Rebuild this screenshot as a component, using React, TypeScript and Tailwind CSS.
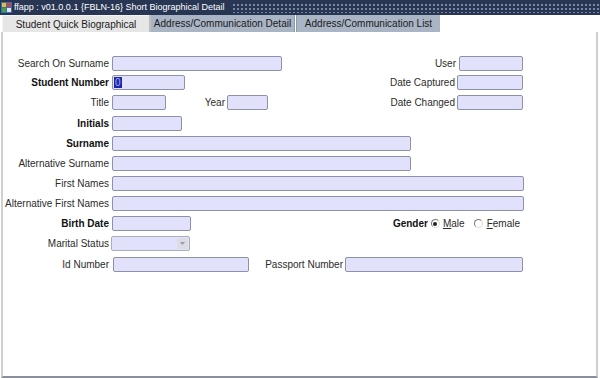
import React from 'react'

const font = { fontFamily: '"Liberation Sans", Arial, sans-serif' }

function Input({ w, children }: { w: string; children?: React.ReactNode }) {
  return (
    <div className={`${w} flex h-[15px] items-center overflow-hidden rounded-[2px] border border-[#8d92a8] bg-[#e1e1fb] pl-px`}>
      {children}
    </div>
  )
}

function Label({ children, bold, w = 'w-[106px]' }: { children: React.ReactNode; bold?: boolean; w?: string }) {
  return (
    <span className={`${w} shrink-0 whitespace-nowrap text-right leading-none ${bold ? 'font-bold text-[#111]' : 'text-[#2b2b2b]'}`}>
      {children}
    </span>
  )
}

function Radio({ on }: { on?: boolean }) {
  return (
    <span className="flex h-[9px] w-[9px] items-center justify-center rounded-full border border-l-[#777] border-t-[#777] border-r-[#ddd] border-b-[#ddd] bg-white">
      {on && <span className="h-[4px] w-[4px] rounded-full bg-[#222]" />}
    </span>
  )
}

export default function App() {
  return (
    <div className="h-[378px] w-[600px] overflow-hidden bg-white text-[10px]" style={font}>
      {/* title bar */}
      <div className="flex h-[15px] items-center bg-[#283654] text-white">
        <svg width="11" height="11" viewBox="0 0 11 11" className="ml-[1px] shrink-0">
          <rect x="0" y="0" width="11" height="11" fill="#3a6fb0" />
          <rect x="1" y="1" width="4" height="4" fill="#e0c030" />
          <rect x="6" y="1" width="4" height="4" fill="#d04040" />
          <rect x="1" y="6" width="4" height="4" fill="#40a050" />
          <rect x="6" y="6" width="4" height="4" fill="#e8e8f0" />
        </svg>
        <span className="ml-[2px] whitespace-nowrap text-[9px] leading-none">ffapp : v01.0.0.1 {'{'}FBLN-16{'}'} Short Biographical Detail</span>
        <span className="ml-[7px] h-[10px] flex-1 bg-[radial-gradient(circle,#7b89a8_0.7px,transparent_0.9px)] bg-[length:4px_4px]" />
      </div>

      {/* tabs */}
      <div className="flex h-[17px] items-end whitespace-nowrap bg-white">
        <div className="ml-[2px] flex h-[17px] w-[147px] items-center justify-center border-l border-t border-[#f4f4f4] bg-[#e6e6e6] text-[#1a1a1a]">
          Student Quick Biographical
        </div>
        <div className="h-[17px] w-[2px] bg-[#bfbfbf]" />
        <div className="flex h-[17px] w-[143px] items-center justify-center bg-[#a9b4c5] text-[#1a1a1a]">
          Address/Communication Detail
        </div>
        <div className="h-[17px] w-[3px] border-x border-[#8e98aa] bg-white" />
        <div className="flex h-[17px] w-[143px] items-center justify-center bg-[#a9b4c5] text-[#1a1a1a]">
          Address/Communication List
        </div>
      </div>

      {/* panel */}
      <div className="ml-[1px] flex h-[346px] w-[597px] flex-col border-l-2 border-r-2 border-b-2 border-l-[#d0d0d0] border-r-[#cfcfcf] border-b-[#8a8f99]">
        <div className="mt-[24px] flex h-[15px] w-[520px] items-center">
          <Label>Search On Surname</Label>
          <div className="ml-[3px]"><Input w="w-[170px]" /></div>
          <div className="ml-auto flex items-center gap-[3px]">
            <Label w="w-auto">User</Label>
            <Input w="w-[64px]" />
          </div>
        </div>

        <div className="mt-[4px] flex h-[15px] w-[520px] items-center">
          <Label bold>Student Number</Label>
          <div className="ml-[3px]">
            <Input w="w-[73px]">
              <span className="bg-[#1f27a8] px-px leading-[11px] text-[#9fb0ff]">0</span>
            </Input>
          </div>
          <div className="ml-auto flex items-center gap-[2px]">
            <Label w="w-auto">Date Captured</Label>
            <Input w="w-[66px]" />
          </div>
        </div>

        <div className="mt-[5px] flex h-[15px] w-[520px] items-center">
          <Label>Title</Label>
          <div className="ml-[3px]"><Input w="w-[54px]" /></div>
          <Label w="w-[59px]">Year</Label>
          <div className="ml-[2px]"><Input w="w-[41px]" /></div>
          <div className="ml-auto flex items-center gap-[2px]">
            <Label w="w-auto">Date Changed</Label>
            <Input w="w-[66px]" />
          </div>
        </div>

        <div className="mt-[6px] flex h-[15px] items-center">
          <Label bold>Initials</Label>
          <div className="ml-[3px]"><Input w="w-[70px]" /></div>
        </div>

        <div className="mt-[5px] flex h-[15px] items-center">
          <Label bold>Surname</Label>
          <div className="ml-[3px]"><Input w="w-[299px]" /></div>
        </div>

        <div className="mt-[5px] flex h-[15px] items-center">
          <Label>Alternative Surname</Label>
          <div className="ml-[3px]"><Input w="w-[299px]" /></div>
        </div>

        <div className="mt-[5px] flex h-[15px] items-center">
          <Label>First Names</Label>
          <div className="ml-[3px]"><Input w="w-[412px]" /></div>
        </div>

        <div className="mt-[5px] flex h-[15px] items-center">
          <Label>Alternative First Names</Label>
          <div className="ml-[3px]"><Input w="w-[412px]" /></div>
        </div>

        <div className="mt-[5px] flex h-[15px] w-[520px] items-center">
          <Label bold>Birth Date</Label>
          <div className="ml-[3px]"><Input w="w-[79px]" /></div>
          <div className="ml-auto mr-[3px] flex items-center text-[#2b2b2b]">
            <span className="mr-[3px] font-bold text-[#111]">Gender</span>
            <Radio on />
            <span className="ml-[3px]"><span className="underline">M</span>ale</span>
            <span className="ml-[9px]"><Radio /></span>
            <span className="ml-[4px]"><span className="underline">F</span>emale</span>
          </div>
        </div>

        <div className="mt-[5px] flex h-[15px] items-center">
          <Label>Marital Status</Label>
          <div className="ml-[2px] flex h-[15px] w-[79px] items-center justify-end rounded-[2px] border border-[#a9adbd] bg-[#e1e1fb]">
            <span className="mr-px flex h-[11px] w-[11px] items-center justify-center rounded-[1px] bg-[#dcdce4]">
              <svg width="5" height="3" viewBox="0 0 5 3"><path d="M0 0h5L2.5 3z" fill="#9a9aa8" /></svg>
            </span>
          </div>
        </div>

        <div className="mt-[6px] flex h-[15px] w-[520px] items-center">
          <Label>Id Number</Label>
          <div className="ml-[4px]"><Input w="w-[136px]" /></div>
          <div className="ml-auto flex items-center gap-[2px]">
            <Label w="w-auto">Passport Number</Label>
            <Input w="w-[178px]" />
          </div>
        </div>
      </div>
    </div>
  )
}
